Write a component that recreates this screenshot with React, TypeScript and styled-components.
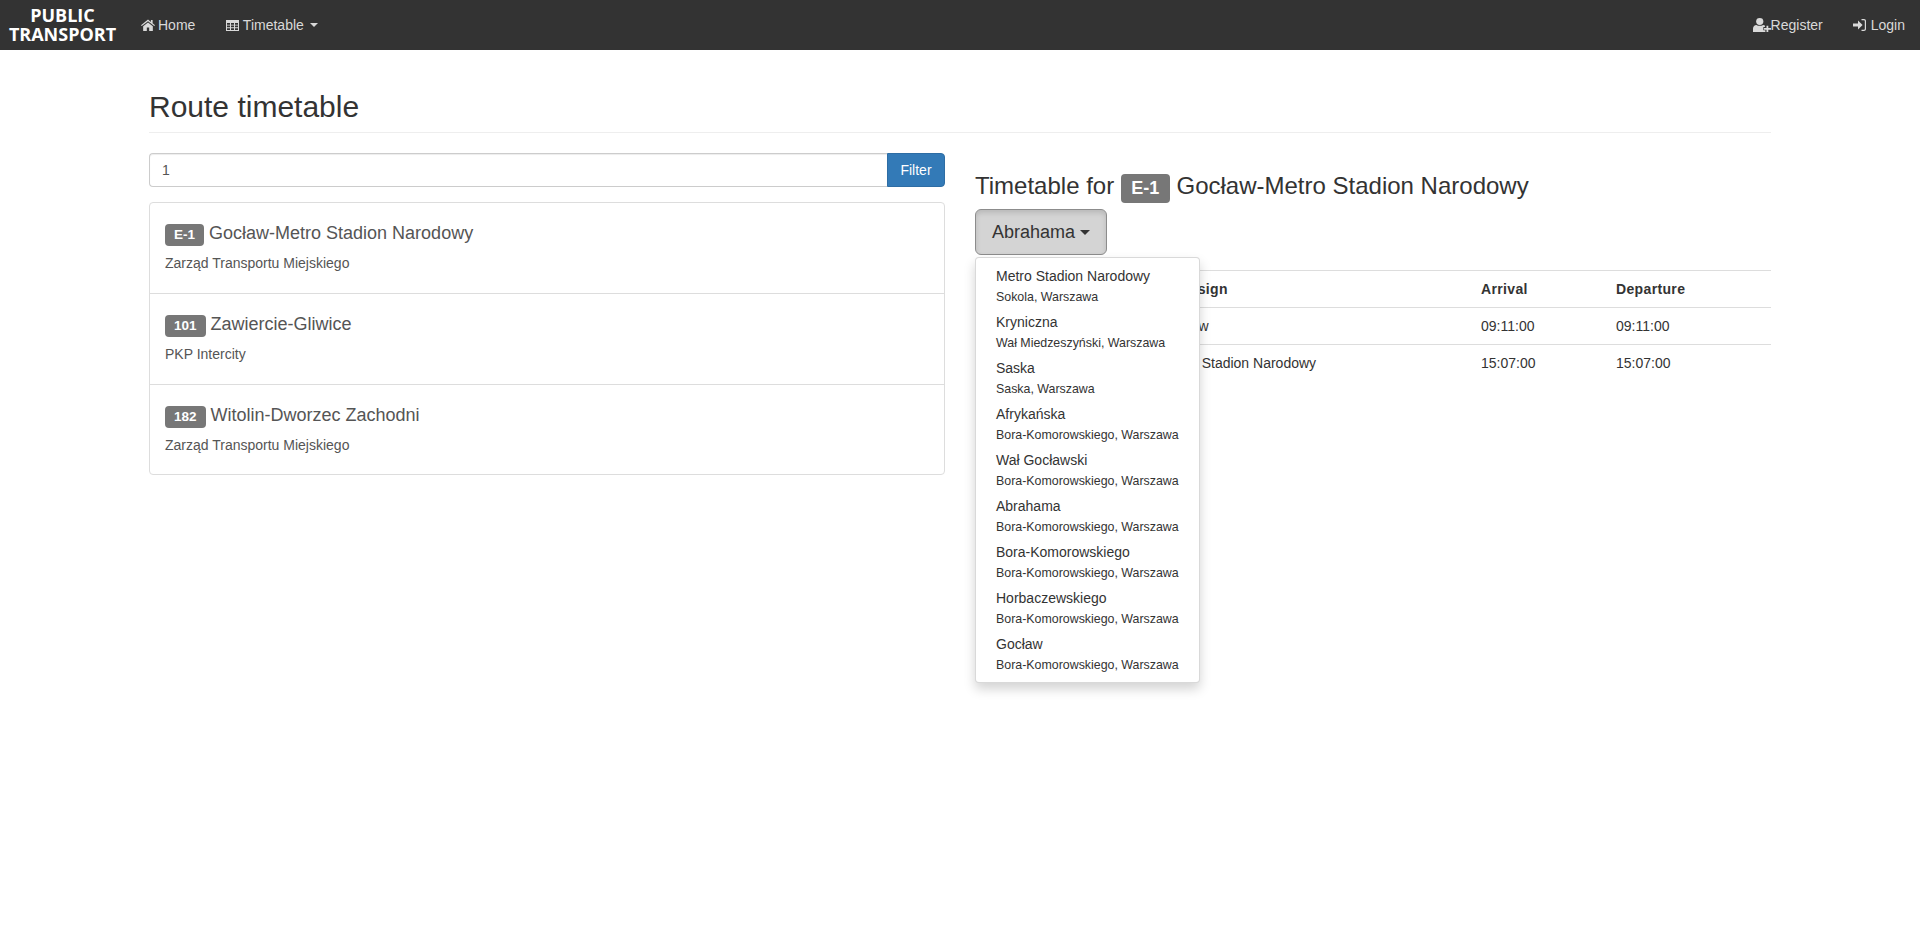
import React from 'react';
import styled, { createGlobalStyle } from 'styled-components';

const Global = createGlobalStyle`
  * { box-sizing: border-box; }
  html, body { margin: 0; padding: 0; background: #fff; }
  body { font-family: "Liberation Sans", Arial, sans-serif; font-size: 14px; line-height: 20px; color: #333; }
  #root { min-height: 100vh; }
`;

const Navbar = styled.nav`
  height: 50px;
  background: #333;
  display: flex;
  justify-content: space-between;
  align-items: stretch;
  color: #d9d9d9;
`;
const NavGroup = styled.div`
  display: flex;
  align-items: stretch;
`;
const Brand = styled.a`
  width: 125px;
  padding-top: 6px;
  text-align: center;
  font-family: "Open Sans", sans-serif;
  font-weight: 700;
  font-size: 18px;
  line-height: 19px;
  color: #fff;
`;
const NavLink = styled.a`
  display: flex;
  align-items: center;
  padding: 0 15px;
  color: #d9d9d9;
  white-space: nowrap;
  svg { fill: currentColor; flex: none; }
`;
const Caret = styled.span<{ $size?: number }>`
  display: inline-block;
  width: 0;
  height: 0;
  margin-left: ${p => (p.$size ?? 4) === 5 ? 5 : 6}px;
  border-top: ${p => p.$size ?? 4}px solid currentColor;
  border-left: ${p => p.$size ?? 4}px solid transparent;
  border-right: ${p => p.$size ?? 4}px solid transparent;
`;
const Container = styled.main`
  width: 1652px;
  margin: 0 auto;
  padding: 0 15px;
`;
const PageHeader = styled.div`
  margin-top: 40px;
  padding-bottom: 9px;
  border-bottom: 1px solid #eee;
  margin-bottom: 20px;
`;
const Title = styled.h1`
  margin: 0;
  font-size: 30px;
  line-height: 33px;
  font-weight: 500;
`;
const Columns = styled.div`
  display: grid;
  grid-template-columns: 796px 796px;
  gap: 30px;
`;
const InputGroup = styled.div`
  display: flex;
  height: 34px;
  margin-bottom: 15px;
`;
const Input = styled.div`
  flex: 1;
  padding: 6px 12px;
  border: 1px solid #ccc;
  border-right: 0;
  border-radius: 4px 0 0 4px;
  color: #555;
  box-shadow: inset 0 1px 1px rgba(0,0,0,.075);
`;
const FilterButton = styled.button`
  width: 58px;
  background: #337ab7;
  border: 1px solid #2e6da4;
  border-radius: 0 4px 4px 0;
  color: #fff;
  font: inherit;
  padding: 0;
`;
const ListGroup = styled.div`
  border: 1px solid #ddd;
  border-radius: 4px;
`;
const ListItem = styled.a`
  display: block;
  height: 90px;
  padding: 16px 15px 0;
  color: #555;
  & + & { border-top: 1px solid #ddd; height: 91px; }
  &:last-child { height: 90px; }
`;
const ItemTitle = styled.h4`
  margin: 0 0 5px;
  font-size: 18px;
  line-height: 20px;
  font-weight: 500;
  color: #555;
  padding-top: 4px;
`;
const ItemText = styled.p`
  margin: 7px 0 0;
  color: #555;
`;
const Label = styled.span`
  display: inline-block;
  padding: 3.6px 9px 4.5px;
  font-size: 13.5px;
  font-weight: 700;
  line-height: 1;
  color: #fff;
  background: #777;
  border-radius: 4px;
  vertical-align: baseline;
`;
const RightColumn = styled.section`
  padding-top: 10px;
`;
const Heading = styled.h3`
  margin: 7px 0 6px;
  font-size: 24px;
  line-height: 32px;
  font-weight: 500;
  color: #333;
`;
const HeadingLabel = styled(Label)`
  font-size: 18px;
  padding: 5px 10.5px 6px;
`;
const DropdownWrap = styled.div`
  position: relative;
  margin-bottom: 15px;
`;
const DropButton = styled.button`
  display: inline-flex;
  align-items: center;
  height: 46px;
  width: 132px;
  padding: 0 16px;
  font: inherit;
  font-size: 18px;
  color: #333;
  background: #d4d4d4;
  border: 1px solid #8c8c8c;
  border-radius: 6px;
  box-shadow: inset 0 3px 5px rgba(0,0,0,.125);
`;
const Menu = styled.ul`
  position: absolute;
  top: 48px;
  left: 0;
  z-index: 10;
  width: 225px;
  margin: 0;
  padding: 5px 0;
  list-style: none;
  background: #fff;
  border: 1px solid rgba(0,0,0,.15);
  border-radius: 4px;
  box-shadow: 0 6px 12px rgba(0,0,0,.175);
`;
const MenuItem = styled.li`
  height: 46px;
  padding: 3px 20px 0;
  color: #333;
  white-space: nowrap;
`;
const MenuSub = styled.small`
  display: block;
  font-size: 12.4px;
  line-height: 20px;
  margin-top: 1px;
`;
const Table = styled.table`
  width: 796px;
  table-layout: fixed;
  border-collapse: collapse;
  margin-top: 0;
  th, td { padding: 8px; text-align: left; line-height: 20px; border-top: 1px solid #ddd; }
  th { font-weight: 700; border-bottom: 1px solid #ddd; letter-spacing: .35px; }
`;
const NameHeader = styled.th`
  && { padding-left: 11px; }
`;
const NameCell = styled.td`
  && { padding-left: 11px; }
`;

const stops: [string, string][] = [
  ['Metro Stadion Narodowy', 'Sokola, Warszawa'],
  ['Kryniczna', 'Wał Miedzeszyński, Warszawa'],
  ['Saska', 'Saska, Warszawa'],
  ['Afrykańska', 'Bora-Komorowskiego, Warszawa'],
  ['Wał Gocławski', 'Bora-Komorowskiego, Warszawa'],
  ['Abrahama', 'Bora-Komorowskiego, Warszawa'],
  ['Bora-Komorowskiego', 'Bora-Komorowskiego, Warszawa'],
  ['Horbaczewskiego', 'Bora-Komorowskiego, Warszawa'],
  ['Gocław', 'Bora-Komorowskiego, Warszawa'],
];
const routes = [
  { code: 'E-1', name: 'Gocław-Metro Stadion Narodowy', op: 'Zarząd Transportu Miejskiego' },
  { code: '101', name: 'Zawiercie-Gliwice', op: 'PKP Intercity' },
  { code: '182', name: 'Witolin-Dworzec Zachodni', op: 'Zarząd Transportu Miejskiego' },
];

const HomeIcon = () => (
  <svg width="14" height="12" viewBox="0 0 13 12" preserveAspectRatio="none" style={{ marginLeft: 1, marginRight: 3 }}>
    <path d="M6.5 0.6 0 6.2l.7.8L6.5 2.2 12.3 7l.7-.8-2.2-1.9V1H9.2v1.9zM2 7.2V12h3.4V8.4h2.2V12H11V7.2L6.5 3.4z" />
  </svg>
);
const TableIcon = () => (
  <svg width="13" height="11" viewBox="0 0 13 11" style={{ marginLeft: 1, marginRight: 3.5 }}>
    <path fillRule="evenodd" d="M0 0h13v11H0zM1 3v1.7h3V3zm4 0v1.7h3V3zm4 0v1.7h3V3zM1 5.6v1.7h3V5.6zm4 0v1.7h3V5.6zm4 0v1.7h3V5.6zM1 8.2V10h3V8.2zm4 0V10h3V8.2zm4 0V10h3V8.2z" />
  </svg>
);
const UserPlusIcon = () => (
  <svg width="18" height="14" viewBox="0 0 16 13" preserveAspectRatio="none">
    <circle cx="6" cy="3.2" r="3.2" />
    <path d="M0 13V9.8C0 7.8 1.4 6.6 3 6.4c1.6 1.2 4.4 1.2 6 0 .6.1 1.1.3 1.6.6v1.4H9.2v3h1.8V13z" />
    <path d="M12 7.2h1.6v2.2H16V11h-2.4v2H12v-2H9.8V9.4H12z" />
  </svg>
);
const SignInIcon = () => (
  <svg width="13" height="12" viewBox="0 0 13 12" style={{ marginRight: 5 }}>
    <path d="M5 1.6 9.6 6 5 10.4V7.6H0V4.4h5z" />
    <path d="M8.5 0H11c1.2 0 2 .9 2 2v8c0 1.1-.8 2-2 2H8.5v-1.2H11c.5 0 .8-.4.8-.8V2c0-.4-.3-.8-.8-.8H8.5z" />
  </svg>
);

export default function App() {
  return (
    <>
      <Global />
      <Navbar>
        <NavGroup>
          <Brand>PUBLIC<br />TRANSPORT</Brand>
          <NavLink><HomeIcon />Home</NavLink>
          <NavLink><TableIcon />Timetable<Caret /></NavLink>
        </NavGroup>
        <NavGroup>
          <NavLink><UserPlusIcon />Register</NavLink>
          <NavLink><SignInIcon />Login</NavLink>
        </NavGroup>
      </Navbar>
      <Container>
        <PageHeader><Title>Route timetable</Title></PageHeader>
        <Columns>
          <div>
            <InputGroup>
              <Input>1</Input>
              <FilterButton>Filter</FilterButton>
            </InputGroup>
            <ListGroup>
              {routes.map(r => (
                <ListItem key={r.code}>
                  <ItemTitle><Label>{r.code}</Label> {r.name}</ItemTitle>
                  <ItemText>{r.op}</ItemText>
                </ListItem>
              ))}
            </ListGroup>
          </div>
          <RightColumn>
            <Heading>Timetable for <HeadingLabel>E-1</HeadingLabel> Gocław-Metro Stadion Narodowy</Heading>
            <DropdownWrap>
              <DropButton>Abrahama<Caret $size={5} /></DropButton>
              <Menu>
                {stops.map(([a, b]) => (
                  <MenuItem key={a}>{a}<MenuSub>{b}</MenuSub></MenuItem>
                ))}
              </Menu>
            </DropdownWrap>
            <Table>
              <colgroup>
                <col style={{ width: 176 }} />
                <col style={{ width: 322 }} />
                <col style={{ width: 135 }} />
                <col style={{ width: 163 }} />
              </colgroup>
              <thead>
                <tr><th>#</th><NameHeader>Headsign</NameHeader><th>Arrival</th><th>Departure</th></tr>
              </thead>
              <tbody>
                <tr><td>1</td><NameCell>Gocław</NameCell><td>09:11:00</td><td>09:11:00</td></tr>
                <tr><td>2</td><NameCell>Metro Stadion Narodowy</NameCell><td>15:07:00</td><td>15:07:00</td></tr>
              </tbody>
            </Table>
          </RightColumn>
        </Columns>
      </Container>
    </>
  );
}
